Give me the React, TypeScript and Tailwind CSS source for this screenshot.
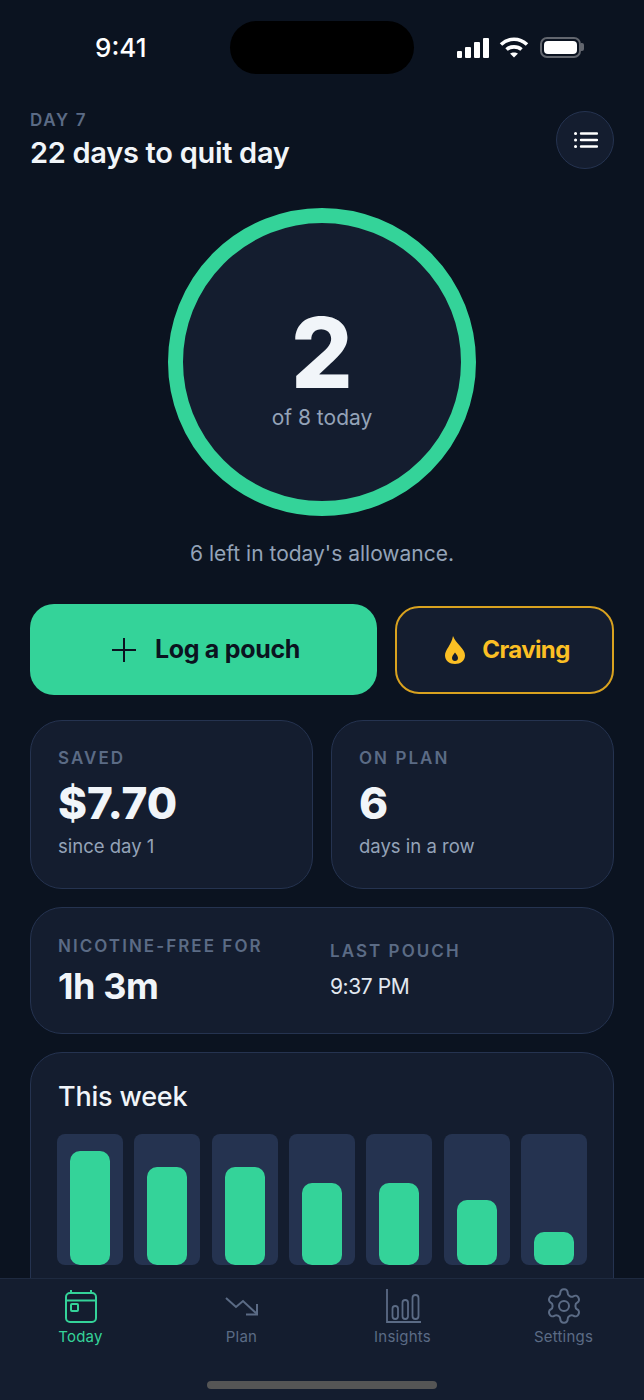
const week = [114, 98, 98, 82, 82, 65, 33];

const label = "text-[17px] font-semibold tracking-[2.050px] text-[#5b6b85] leading-[20px]";

function Flame() {
  return (
    <svg width="22" height="30" viewBox="0 0 22 30">
      <path
        fillRule="evenodd"
        fill="#fbbf24"
        d="M9 1C10.500 5 13 7.500 16 11 19 14.500 21 17 21 20.500 21 25.500 16.500 29 11 29 5.500 29 1 25.500 1 20.500 1 14.500 7.500 10 9 1ZM11 17.500C9.500 19.500 8 21.300 8 23 8 24.700 9.300 26 11 26 12.700 26 14 24.700 14 23 14 21.300 12.500 19.500 11 17.500Z"
      />
    </svg>
  );
}

function StatusBar() {
  return (
    <div className="h-[110px] shrink-0 relative">
      <div className="absolute left-[95px] top-[32px] text-[26px] leading-[32px] font-medium text-white">9:41</div>
      <div className="absolute left-[230px] top-[21px] w-[184px] h-[53px] rounded-full bg-black" />
      <div className="absolute left-[457px] top-[37px] flex items-end gap-[3px] h-[21px]">
        <div className="w-[5px] h-[7px] rounded-[1px] bg-white" />
        <div className="w-[6px] h-[11px] rounded-[1px] bg-white" />
        <div className="w-[6px] h-[16px] rounded-[1px] bg-white" />
        <div className="w-[6px] h-[20px] rounded-[1px] bg-white" />
      </div>
      <svg className="absolute left-[499px] top-[36px]" width="30" height="22" viewBox="0 0 30 22">
        <path d="M2 8.500C9.500 1.500 20.500 1.500 28 8.500" stroke="#fff" strokeWidth="3.600" fill="none" />
        <path d="M7.500 13.500C11.500 10 18.500 10 22.500 13.500" stroke="#fff" strokeWidth="3.600" fill="none" />
        <path d="M11 17.500C13 16 17 16 19 17.500L15 21.500Z" fill="#fff" />
      </svg>
      <div className="absolute left-[540px] top-[37px] w-[41px] h-[21px] rounded-[7px] border-2 border-[#62666e] p-[2px]">
        <div className="w-full h-full rounded-[4px] bg-white" />
      </div>
      <div className="absolute left-[581px] top-[43px] w-[3px] h-[8px] rounded-r-[2px] bg-[#62666e]" />
    </div>
  );
}

function TabBar() {
  return (
    <div className="absolute left-0 right-0 bottom-0 h-[122px] bg-[#141d2f] border-t border-[#1e2a40]">
      <div className="grid grid-cols-4 pt-[10px]">
        <div className="flex flex-col items-center text-[#34d399]">
          <svg width="34" height="34" viewBox="0 0 34 34" fill="none" stroke="currentColor" strokeWidth="2">
            <rect x="2" y="4" width="30" height="29" rx="4" />
            <path d="M2 11.500H32M7 1V4M27 1V4" />
            <rect x="7" y="15" width="7" height="7" rx="1" />
          </svg>
          <span className="text-[15px] leading-[20px] mt-[4px] tracking-[0.2px]">Today</span>
        </div>
        <div className="flex flex-col items-center text-[#5b6b85]">
          <svg width="34" height="34" viewBox="0 0 34 34" fill="none" stroke="currentColor" strokeWidth="2">
            <path d="M1 9L11 18 18 12 32 25" />
            <path d="M32 15V25.500H21" />
          </svg>
          <span className="text-[15px] leading-[20px] mt-[4px] tracking-[0.2px]">Plan</span>
        </div>
        <div className="flex flex-col items-center text-[#5b6b85]">
          <svg width="36" height="36" viewBox="0 0 36 36" fill="none" stroke="currentColor" strokeWidth="1.800" className="mt-[-2px]">
            <path d="M2 2V35H36" />
            <rect x="7.500" y="19" width="5.500" height="13" rx="2.700" />
            <rect x="17.500" y="13" width="5.500" height="19" rx="2.700" />
            <rect x="27.500" y="8" width="6" height="24" rx="3" />
          </svg>
          <span className="text-[15px] leading-[20px] mt-[4px] tracking-[0.2px]">Insights</span>
        </div>
        <div className="flex flex-col items-center text-[#5b6b85]">
          <svg width="40" height="40" viewBox="0 0 24 24" fill="none" stroke="currentColor" strokeWidth="1.200" className="my-[-3px]">
            <path d="M12.220 2h-.44a2 2 0 0 0-2 2v.18a2 2 0 0 1-1 1.730l-.43.250a2 2 0 0 1-2 0l-.15-.08a2 2 0 0 0-2.730.730l-.22.380a2 2 0 0 0 .730 2.730l.150.100a2 2 0 0 1 1 1.720v.510a2 2 0 0 1-1 1.740l-.150.090a2 2 0 0 0-.730 2.730l.220.380a2 2 0 0 0 2.730.730l.150-.08a2 2 0 0 1 2 0l.430.250a2 2 0 0 1 1 1.730V20a2 2 0 0 0 2 2h.44a2 2 0 0 0 2-2v-.18a2 2 0 0 1 1-1.730l.43-.250a2 2 0 0 1 2 0l.150.080a2 2 0 0 0 2.730-.730l.220-.390a2 2 0 0 0-.730-2.730l-.150-.080a2 2 0 0 1-1-1.740v-.500a2 2 0 0 1 1-1.740l.150-.090a2 2 0 0 0 .730-2.730l-.220-.380a2 2 0 0 0-2.730-.730l-.150.080a2 2 0 0 1-2 0l-.430-.250a2 2 0 0 1-1-1.730V4a2 2 0 0 0-2-2z" />
            <circle cx="12" cy="12" r="3" />
          </svg>
          <span className="text-[15px] leading-[20px] mt-[4px] tracking-[0.2px]">Settings</span>
        </div>
      </div>
      <div className="absolute left-[207px] top-[102px] w-[230px] h-[8px] rounded-full bg-[#555555]" />
    </div>
  );
}

export default function App() {
  return (
    <div
      className="relative w-[644px] h-[1400px] overflow-hidden bg-[#0b1320] flex flex-col"
      style={{ fontFamily: "Inter, 'Liberation Sans', sans-serif" }}
    >
      <StatusBar />

      <div className="px-[30px] flex justify-between items-start">
        <div>
          <div className="text-[17px] leading-[20px] font-semibold tracking-[1.700px] text-[#5b6b85]">DAY 7</div>
          <div className="text-[29px] leading-[34px] font-semibold text-[#f1f5f9] mt-[6px] tracking-[-0.3px]">22 days to quit day</div>
        </div>
        <div className="w-[58px] h-[58px] rounded-full bg-[#141d2f] border border-[#253350] flex items-center justify-center mt-[1px]">
          <svg width="24" height="20" viewBox="0 0 24 20" fill="none" stroke="#fff" strokeWidth="2.400" strokeLinecap="round" className="ml-[2px]">
            <path d="M7 3.500H23M7 10H23M7 16.500H23" />
            <path d="M1.500 3.500H1.600M1.500 10H1.600M1.500 16.500H1.600" strokeWidth="3" />
          </svg>
        </div>
      </div>

      <div className="flex flex-col items-center mt-[38px]">
        <div className="w-[308px] h-[308px] rounded-full bg-[#141d2f] border-[15px] border-[#34d399] flex flex-col items-center justify-center">
          <div className="text-[97px] leading-[80px] font-extrabold text-[#f1f5f9] mt-[19px]">2</div>
          <div className="text-[21px] leading-[26px] text-[#94a3b8] mt-[12px]">of 8 today</div>
        </div>
        <div className="text-[21px] leading-[26px] text-[#94a3b8] mt-[25px]">6 left in today's allowance.</div>
      </div>

      <div className="px-[30px] flex items-center gap-[18px] mt-[37px]">
        <div className="w-[347px] h-[91px] rounded-[24px] bg-[#34d399] flex items-center justify-center gap-[19px] pl-[5px]">
          <svg width="24" height="24" viewBox="0 0 24 24" fill="none" stroke="#0b1320" strokeWidth="2">
            <path d="M12 0V24M0 12H24" />
          </svg>
          <span className="text-[25px] font-bold text-[#0b1320] tracking-[-0.3px] mt-[1px]">Log a pouch</span>
        </div>
        <div className="flex-1 h-[88px] rounded-[24px] bg-[#141d2f] border-2 border-[#d9a21f] flex items-center justify-center gap-[16px] pl-[5px]">
          <Flame />
          <span className="text-[24px] font-bold text-[#fbbf24] tracking-[-0.6px]">Craving</span>
        </div>
      </div>

      <div className="px-[30px] grid grid-cols-[283px_283px] gap-[18px] mt-[25px]">
        <div className="h-[169px] rounded-[32px] bg-[#141d2f] border border-[#253350] px-[27px] pt-[27px]">
          <div className={label}>SAVED</div>
          <div className="text-[44px] leading-[52px] font-extrabold text-[#f1f5f9] mt-[9px]">$7.70</div>
          <div className="text-[18.500px] leading-[24px] text-[#94a3b8] mt-[5px]">since day 1</div>
        </div>
        <div className="h-[169px] rounded-[32px] bg-[#141d2f] border border-[#253350] px-[27px] pt-[27px]">
          <div className={label}>ON PLAN</div>
          <div className="text-[44px] leading-[52px] font-extrabold text-[#f1f5f9] mt-[9px]">6</div>
          <div className="text-[18.500px] leading-[24px] text-[#94a3b8] mt-[5px]">days in a row</div>
        </div>
      </div>

      <div className="mx-[30px] mt-[18px] h-[127px] rounded-[32px] bg-[#141d2f] border border-[#253350] px-[27px] flex">
        <div className="w-[272px] pt-[28px]">
          <div className={label}>NICOTINE-FREE FOR</div>
          <div className="text-[36px] leading-[40px] font-bold text-[#f1f5f9] mt-[10px] tracking-[-0.4px]">1h 3m</div>
        </div>
        <div className="pt-[33px]">
          <div className={label}>LAST POUCH</div>
          <div className="text-[21px] leading-[26px] text-[#e2e8f0] mt-[13px] tracking-[-0.4px]">9:37 PM</div>
        </div>
      </div>

      <div className="mx-[30px] mt-[18px] h-[300px] shrink-0 rounded-[32px] bg-[#141d2f] border border-[#253350] px-[26px] pt-[27px]">
        <div className="text-[27px] leading-[34px] font-medium text-[#f1f5f9] tracking-[-0.2px] pl-[1px]">This week</div>
        <div className="flex justify-between mt-[20px]">
          {week.map((h, i) => (
            <div key={i} className="w-[66px] h-[131px] rounded-[8px] bg-[#253350] flex items-end justify-center">
              <div className="w-[40px] rounded-[10px] bg-[#34d399]" style={{ height: h }} />
            </div>
          ))}
        </div>
      </div>

      <TabBar />
    </div>
  );
}
